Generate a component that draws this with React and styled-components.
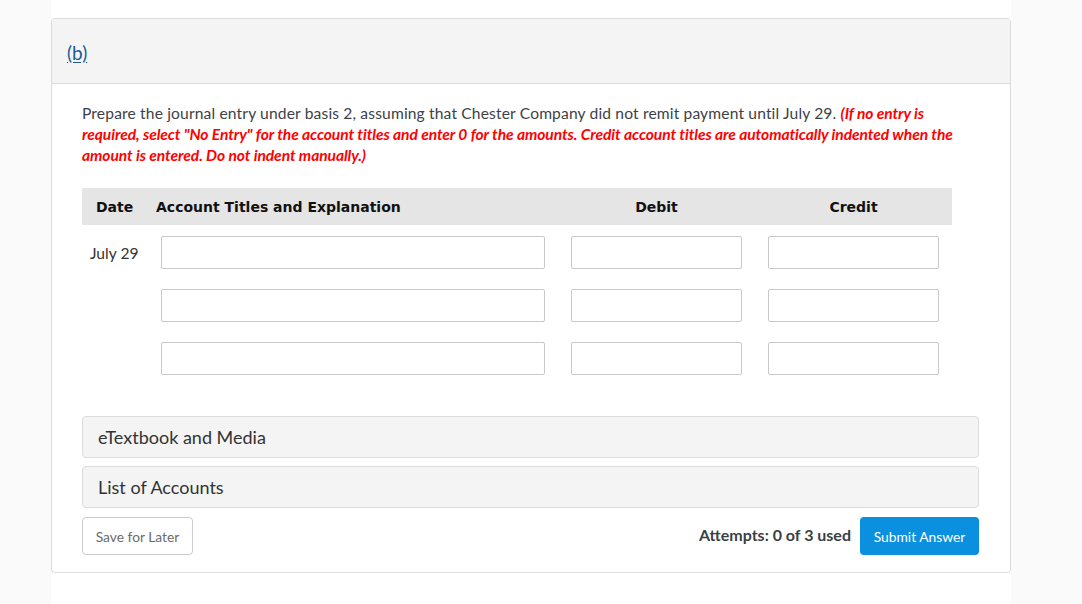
import React from "react";
import styled, { createGlobalStyle } from "styled-components";

const Global = createGlobalStyle`
  html, body { margin: 0; padding: 0; }
  body {
    background: #fafafa;
    font-family: Lato, "Open Sans", Arial, sans-serif;
    color: #333;
  }
`;

const Page = styled.div`
  width: 960px;
  margin-left: 51px;
  min-height: 604px;
  background: #fff;
  padding-top: 18px;
  box-sizing: border-box;
`;

const Card = styled.section`
  border: 1px solid #dcdcdc;
  border-radius: 4px;
  background: #fff;
  overflow: hidden;
`;

const CardHeader = styled.div`
  height: 65px;
  background: #f4f4f4;
  border-bottom: 1px solid #dcdcdc;
  display: flex;
  align-items: center;
  padding: 0 15px;
  padding-top: 2px;
  box-sizing: border-box;
`;

const PartLink = styled.a`
  font-size: 19px;
  color: #1c5d95;
  text-decoration: underline;
  text-underline-offset: 2px;
`;

const Body = styled.div`
  padding: 19px 31px 17px 30px;
`;

const Prompt = styled.p`
  margin: 0;
  width: 880px;
  font-size: 15.6px;
  line-height: 21px;
  letter-spacing: 0.15px;
  color: #3d4247;
`;

const Warn = styled.em`
  color: #ff0000;
  font-weight: 700;
  font-style: italic;
  letter-spacing: -0.08px;
`;

const Table = styled.div`
  width: 870px;
  margin-top: 22px;
`;

const Grid = styled.div`
  display: grid;
  grid-template-columns: 53px 384px 171px 171px;
  column-gap: 26px;
  align-items: center;
`;

const HeadRow = styled.div`
  display: grid;
  align-items: center;
  height: 37px;
  background: #e5e5e5;
  font-family: "DejaVu Sans", Verdana, sans-serif;
  font-weight: 700;
  font-size: 14px;
  color: #111;
  grid-template-columns: 79px 410px 171px 26px 171px;
`;

const HeadCell = styled.div`
  padding-left: ${(p) => p.$pl || 0}px;
  margin-left: ${(p) => p.$ml || 0}px;
  text-align: ${(p) => (p.$center ? "center" : "left")};
  grid-column: ${(p) => p.$col || "auto"};
`;

const Rows = styled.div`
  display: flex;
  flex-direction: column;
  gap: 20px;
  padding-top: 11px;
`;

const DateCell = styled.div`
  font-size: 15.6px;
  color: #333;
  padding-left: 8px;
  white-space: nowrap;
`;

const Field = styled.input`
  box-sizing: border-box;
  height: 33px;
  width: 100%;
  border: 1px solid #c8c8c8;
  border-radius: 2px;
  background: #fff;
  font: inherit;
  padding: 0 6px;
  outline: none;
`;

const Panels = styled.div`
  margin-top: 41px;
  display: flex;
  flex-direction: column;
  gap: 8px;
`;

const Panel = styled.div`
  height: 42px;
  box-sizing: border-box;
  border: 1px solid #dcdcdc;
  border-radius: 4px;
  background: #f4f4f4;
  display: flex;
  align-items: center;
  padding-left: 15px;
  font-size: 18px;
  color: #333;
`;

const Footer = styled.div`
  margin-top: 9px;
  display: flex;
  align-items: center;
  justify-content: space-between;
`;

const SaveButton = styled.button`
  height: 38px;
  width: 111px;
  border: 1px solid #ccc;
  border-radius: 4px;
  background: #fff;
  font-family: Lato, sans-serif;
  font-size: 13.8px;
  color: #6b6b6b;
  padding: 0;
`;

const Right = styled.div`
  display: flex;
  align-items: center;
  gap: 9px;
`;

const Attempts = styled.span`
  font-size: 16px;
  font-weight: 700;
  color: #3a3f44;
  margin-top: -3px;
`;

const SubmitButton = styled.button`
  height: 38px;
  width: 119px;
  border: none;
  border-radius: 4px;
  background: #0b8fdf;
  color: #fff;
  font-family: Lato, sans-serif;
  font-size: 13.8px;
  padding: 0;
`;

export default function App() {
  const rows = ["July 29", "", ""];
  return (
    <>
      <Global />
      <Page>
        <Card>
          <CardHeader>
            <PartLink href="#">(b)</PartLink>
          </CardHeader>
          <Body>
            <Prompt>
              Prepare the journal entry under basis 2, assuming that Chester Company did not remit
              payment until July 29.{" "}
              <Warn>
                (If no entry is required, select "No Entry" for the account titles and enter 0 for
                the amounts. Credit account titles are automatically indented when the amount is
                entered. Do not indent manually.)
              </Warn>
            </Prompt>
            <Table>
              <HeadRow>
                <HeadCell $pl={14}>Date</HeadCell>
                <HeadCell $ml={-5}>Account Titles and Explanation</HeadCell>
                <HeadCell $center>Debit</HeadCell>
                <HeadCell $center $col="5">Credit</HeadCell>
              </HeadRow>
              <Rows>
                {rows.map((d, i) => (
                  <Grid key={i}>
                    <DateCell>{d}</DateCell>
                    <Field />
                    <Field />
                    <Field />
                  </Grid>
                ))}
              </Rows>
            </Table>
            <Panels>
              <Panel>eTextbook and Media</Panel>
              <Panel>List of Accounts</Panel>
            </Panels>
            <Footer>
              <SaveButton>Save for Later</SaveButton>
              <Right>
                <Attempts>Attempts: 0 of 3 used</Attempts>
                <SubmitButton>Submit Answer</SubmitButton>
              </Right>
            </Footer>
          </Body>
        </Card>
      </Page>
    </>
  );
}
